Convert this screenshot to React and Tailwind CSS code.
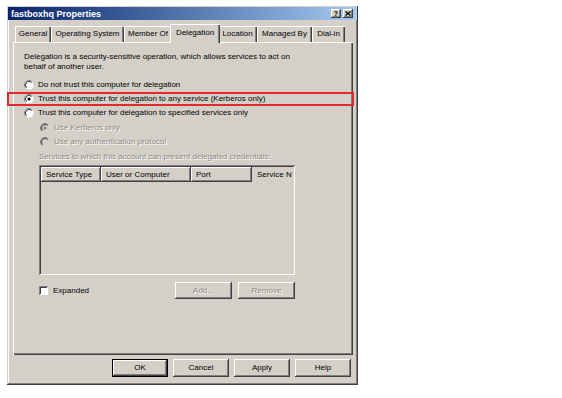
import React from 'react';

// Classic 3D bevels
const raised = "shadow-[inset_-1px_-1px_#404040,inset_1px_1px_#ffffff,inset_-2px_-2px_#808080]";
const sunken = "shadow-[inset_1px_1px_#808080,inset_-1px_-1px_#ffffff,inset_2px_2px_#404040,inset_-2px_-2px_#d4d0c8]";
const dim = "text-[#8d8a85] [text-shadow:1px_1px_0_#ffffff]";

const Radio = ({ checked = false, disabled = false }) => (
  <svg width="10" height="10" viewBox="0 0 10 10" className="shrink-0">
    <circle cx="5" cy="5" r="4.5" fill={disabled ? "#d4d0c8" : "#ffffff"} />
    <path d="M8.2 1.8 A4.5 4.5 0 0 0 1.8 8.2" fill="none" stroke="#808080" strokeWidth="1" />
    <path d="M7.5 2.5 A3.5 3.5 0 0 0 2.5 7.5" fill="none" stroke="#404040" strokeWidth="1" />
    {checked && <circle cx="5" cy="5" r="1.6" fill={disabled ? "#808080" : "#000000"} />}
  </svg>
);

const RadioRow = ({ label, checked, disabled, className = "" }) => (
  <div className={`flex items-center h-[14px] gap-[4px] ${className}`}>
    <Radio checked={checked} disabled={disabled} />
    <span className={disabled ? dim : ""}>{label}</span>
  </div>
);

const Button = ({ children, className = "", isDefault = false, disabled = false }) => (
  <div
    className={`flex items-center justify-center ${isDefault ? "border border-black" : ""} ${raised} ${disabled ? dim : ""} ${className}`}
  >
    {children}
  </div>
);

const Tab = ({ label, width, selected = false }) => (
  <div
    className={`flex items-center justify-center bg-[#d4d0c8] whitespace-nowrap ${
      selected
        ? "h-[19px] -mx-[2px] -mb-[1px] relative z-10 shadow-[inset_1px_1px_#ffffff,inset_-1px_0_#404040,inset_-2px_0_#808080] pb-[2px]"
        : "h-[16px] shadow-[inset_1px_1px_#ffffff,inset_-1px_0_#404040,inset_-2px_0_#808080]"
    }`}
    style={{ width }}
  >
    {label}
  </div>
);

const HeaderCell = ({ label, width, last = false }) => (
  <div
    className={`h-full flex items-center pl-[5px] whitespace-nowrap ${last ? "" : raised}`}
    style={{ width }}
  >
    {label}
  </div>
);

export default function App() {
  return (
    <div
      className="relative w-[562px] h-[398px] bg-white pt-[6px] pl-[7px] text-[8px] leading-[10px] text-black"
      style={{ fontFamily: '"Liberation Sans", Arial, sans-serif' }}
    >
      <div className="w-[351px] h-[379px] bg-[#d4d0c8] flex flex-col shadow-[inset_-1px_-1px_#404040,inset_1px_1px_#d4d0c8,inset_-2px_-2px_#808080,inset_2px_2px_#ffffff]">
        {/* Title bar */}
        <div className="mx-[1px] mt-[1px] h-[13px] flex items-center justify-between pl-[3px] pr-[4px] bg-gradient-to-r from-[#0a246a] to-[#a6caf0]">
          <span className="text-white font-bold text-[9px]">fastboxhq Properties</span>
          <div className="flex gap-[2px]">
            <div className={`w-[10px] h-[9px] flex items-center justify-center bg-[#d4d0c8] text-[7px] font-bold leading-none ${raised}`}>?</div>
            <div className={`w-[10px] h-[9px] flex items-center justify-center bg-[#d4d0c8] ${raised}`}>
              <svg width="6" height="5" viewBox="0 0 6 5">
                <path d="M0.5 0.5 L5.5 4.5 M5.5 0.5 L0.5 4.5" stroke="#000" strokeWidth="1.3" />
              </svg>
            </div>
          </div>
        </div>

        {/* Tabs */}
        <div className="mt-[4px] ml-[8px] h-[18px] flex items-end">
          <Tab label="General" width={36} />
          <Tab label="Operating System" width={73} />
          <Tab label="Member Of" width={48} />
          <Tab label="Delegation" width={50} selected />
          <Tab label="Location" width={39} />
          <Tab label="Managed By" width={55} />
          <Tab label="Dial-in" width={33} />
        </div>

        {/* Tab panel */}
        <div className="ml-[6px] w-[340px] h-[313px] shadow-[inset_1px_1px_#ffffff,inset_-1px_-1px_#404040,inset_-2px_-2px_#808080] pt-[10px] pl-[11px] flex flex-col">
          <p>
            Delegation is a security-sensitive operation, which allows services to act on
            <br />
            behalf of another user.
          </p>
          <RadioRow className="mt-[6px]" label="Do not trust this computer for delegation" />
          <RadioRow label="Trust this computer for delegation to any service (Kerberos only)" checked />
          <RadioRow label="Trust this computer for delegation to specified services only" />
          <div className="pl-[16px] flex flex-col">
            <RadioRow className="mt-[1px]" label="Use Kerberos only" checked disabled />
            <RadioRow label="Use any authentication protocol" disabled />
          </div>
          <div className={`ml-[15px] mt-[3px] ${dim}`}>
            Services to which this account can present delegated credentials:
          </div>

          {/* List box */}
          <div className={`ml-[15px] mt-[3px] w-[256px] h-[110px] p-[2px] ${sunken}`}>
            <div className="h-[15px] flex">
              <HeaderCell label="Service Type" width={60} />
              <HeaderCell label="User or Computer" width={90} />
              <HeaderCell label="Port" width={61} />
              <HeaderCell label="Service N" width={41} last />
            </div>
          </div>

          {/* Expanded / Add / Remove */}
          <div className="ml-[15px] mt-[7px] w-[256px] flex items-center">
            <div className="flex items-center gap-[5px]">
              <div className="w-[9px] h-[9px] bg-white shadow-[inset_1px_1px_#808080,inset_-1px_-1px_#ffffff,inset_2px_2px_#404040]" />
              <span>Expanded</span>
            </div>
            <div className="ml-auto flex gap-[6px]">
              <Button className="w-[57px] h-[17px]" disabled>Add...</Button>
              <Button className="w-[57px] h-[17px]" disabled>Remove</Button>
            </div>
          </div>
        </div>

        {/* Dialog buttons */}
        <div className="mt-[4px] pr-[7px] flex justify-end gap-[5px]">
          <Button className="w-[56px] h-[18px]" isDefault>OK</Button>
          <Button className="w-[56px] h-[18px]">Cancel</Button>
          <Button className="w-[56px] h-[18px]">Apply</Button>
          <Button className="w-[56px] h-[18px]">Help</Button>
        </div>
      </div>

      {/* Red highlight annotation */}
      <div className="absolute left-[7px] top-[92px] w-[347px] h-[14px] border-2 border-[#e02a2e]" />
    </div>
  );
}
